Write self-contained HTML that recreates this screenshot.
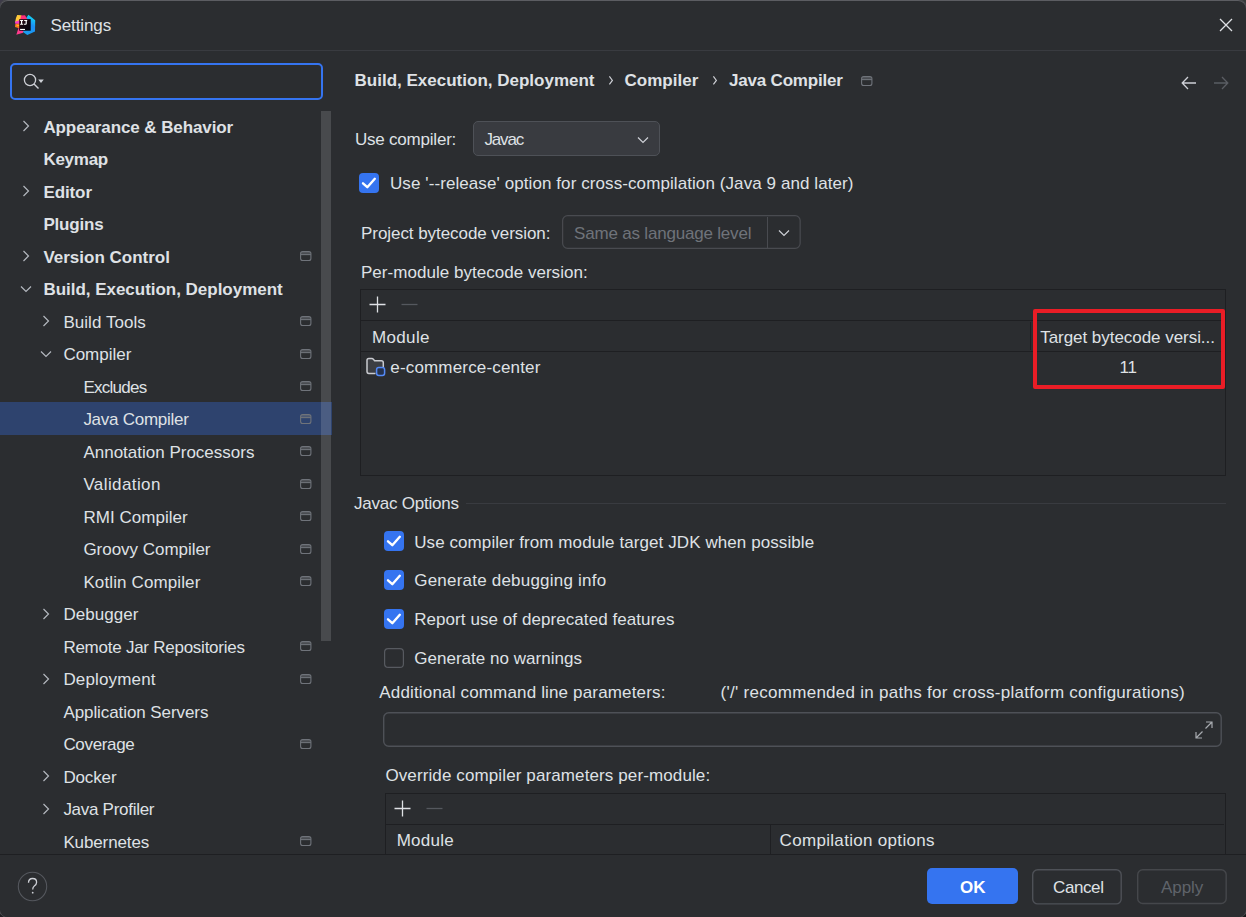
<!DOCTYPE html>
<html><head><meta charset="utf-8">
<style>
html,body{margin:0;padding:0;width:1246px;height:917px;overflow:hidden;background:#1E1F22;position:relative;}
.cn{position:absolute;width:12px;height:12px;}
#win{position:absolute;left:0;top:0;width:1246px;height:917px;background:#2B2D30;border-radius:8px;overflow:hidden;box-shadow:inset 0 1px 0 #5C5D62, 0 0 0 1px #48494D;}
.t{position:absolute;font-family:"Liberation Sans",sans-serif;font-size:17px;line-height:20px;color:#DFE1E5;white-space:nowrap;}
.b{font-weight:bold;}
.g{color:#6F737A;}
.abs{position:absolute;}
svg{position:absolute;overflow:visible;}
</style></head><body>
<div class="cn" style="left:0;top:0;background:#3D3B48;"></div><div class="cn" style="right:0;top:0;background:#363A3A;"></div><div class="cn" style="left:0;bottom:0;background:#1E1F22;"></div><div class="cn" style="right:0;bottom:0;background:#17181A;"></div>
<div id="win">

<svg style="left:12px;top:12px" width="26" height="26" viewBox="0 0 26 26">
    <defs>
      <linearGradient id="lgb" x1="0.7" y1="0" x2="0.3" y2="1"><stop offset="0" stop-color="#11E0F5"/><stop offset="0.45" stop-color="#1C8EF5"/><stop offset="1" stop-color="#1AA0F0"/></linearGradient>
      <linearGradient id="lgk" x1="0" y1="0" x2="1" y2="1"><stop offset="0" stop-color="#3A0A1A"/><stop offset="0.5" stop-color="#12060F"/><stop offset="1" stop-color="#050510"/></linearGradient>
    </defs>
    <polygon points="16.4,2.8 23.2,8.3 23,19.6 15.3,23 10.8,19.9 13.5,7" fill="url(#lgb)"/>
    <polygon points="5.2,3 9.5,3.2 9,8.5 3,10.5 4,6" fill="#FFC93A"/>
    <polygon points="9,3.5 13,3.2 15.2,7 14,9 8,9" fill="#FF2F7A"/>
    <polygon points="3,9.7 8,8 8,12 3.2,11.8" fill="#F53BC8"/>
    <polygon points="3.4,12 8,11.5 8,16.5 3,15" fill="#FF7A1E"/>
    <polygon points="6,14 8,14 8,13.5 4,12.8" fill="#FFD11E"/>
    <polygon points="4.3,22.7 6.5,16 11.5,19 11,20.8" fill="#FF3B8C"/>
    <rect x="7.2" y="7.1" width="11.5" height="11.6" fill="url(#lgk)"/>
    <path d="M8.1 8.1 H11.1 V9.1 H10.2 V11.8 H11.1 V12.8 H8.1 V11.8 H9 V9.1 H8.1 Z M12.2 8.1 H15.2 V9.1 H14.8 V11.6 Q14.8 12.8 13.6 12.8 H11.9 V11.8 H13.2 Q13.6 11.8 13.6 11.4 V9.1 H12.2 Z" fill="#fff"/>
    <rect x="8.1" y="16.9" width="4.9" height="1.1" fill="#fff"/>
  </svg>
<div class="t " style="left:50.5px;top:16px;letter-spacing:-0.100px;">Settings</div>
<svg style="left:1219px;top:18px" width="14" height="14" viewBox="0 0 14 14"><path d="M1 1 L13 13 M13 1 L1 13" stroke="#DFE1E5" stroke-width="1.3" fill="none"/></svg>
<div class="abs" style="left:0px;top:50px;width:1246px;height:1px;background:#393B40;"></div>
<div class="abs" style="left:10px;top:63px;width:309px;height:33px;border:2px solid #3574F0;border-radius:5px;"></div>
<svg style="left:22px;top:72px" width="24" height="18" viewBox="0 0 24 18">
    <circle cx="8" cy="8" r="5.6" stroke="#CED0D6" stroke-width="1.3" fill="none"/>
    <path d="M12 12 L16.5 16.5" stroke="#CED0D6" stroke-width="1.4"/>
    <polygon points="16.2,7.4 21.8,7.4 19,10.9" fill="#CED0D6"/>
  </svg>
<div class="abs" style="left:0;top:101px;width:340px;height:753px;overflow:hidden;">
<div class="abs" style="left:0;top:301px;width:331.5px;height:33px;background:#2E436E;"></div>
<div class="t b" style="left:43.4px;top:17px;letter-spacing:-0.100px;">Appearance &amp; Behavior</div>
<svg style="left:19.8px;top:18.25px" width="12" height="14" viewBox="0 0 12 14"><path d="M3.5 2 L8.5 7 L3.5 12" stroke="#B4B8BF" stroke-width="1.2" fill="none"/></svg>
<div class="t b" style="left:43.4px;top:49px;letter-spacing:-0.260px;">Keymap</div>
<div class="t b" style="left:43.4px;top:82px;letter-spacing:-0.100px;">Editor</div>
<svg style="left:19.8px;top:83.25px" width="12" height="14" viewBox="0 0 12 14"><path d="M3.5 2 L8.5 7 L3.5 12" stroke="#B4B8BF" stroke-width="1.2" fill="none"/></svg>
<div class="t b" style="left:43.4px;top:114px;letter-spacing:-0.183px;">Plugins</div>
<div class="t b" style="left:43.4px;top:147px;">Version Control</div>
<svg style="left:19.8px;top:148.25px" width="12" height="14" viewBox="0 0 12 14"><path d="M3.5 2 L8.5 7 L3.5 12" stroke="#B4B8BF" stroke-width="1.2" fill="none"/></svg>
<svg style="left:300px;top:150.05px" width="12" height="11" viewBox="0 0 12 11"><rect x="0.6" y="0.6" width="10.3" height="8.9" rx="2" stroke="#6F737A" stroke-width="1.1" fill="none"/><rect x="1" y="1" width="9.5" height="2.6" fill="#6F737A" opacity="0.45"/><path d="M0.6 3.6 H10.9" stroke="#6F737A" stroke-width="1.1"/></svg>
<div class="t b" style="left:43.4px;top:179px;letter-spacing:-0.022px;">Build, Execution, Deployment</div>
<svg style="left:19px;top:181.75px" width="14" height="12" viewBox="0 0 14 12"><path d="M2 3.5 L7 8.5 L12 3.5" stroke="#B4B8BF" stroke-width="1.2" fill="none"/></svg>
<div class="t " style="left:63.4px;top:212px;letter-spacing:0.050px;">Build Tools</div>
<svg style="left:39.8px;top:213.25px" width="12" height="14" viewBox="0 0 12 14"><path d="M3.5 2 L8.5 7 L3.5 12" stroke="#B4B8BF" stroke-width="1.2" fill="none"/></svg>
<svg style="left:300px;top:215.05px" width="12" height="11" viewBox="0 0 12 11"><rect x="0.6" y="0.6" width="10.3" height="8.9" rx="2" stroke="#6F737A" stroke-width="1.1" fill="none"/><rect x="1" y="1" width="9.5" height="2.6" fill="#6F737A" opacity="0.45"/><path d="M0.6 3.6 H10.9" stroke="#6F737A" stroke-width="1.1"/></svg>
<div class="t " style="left:63.4px;top:244px;">Compiler</div>
<svg style="left:39px;top:246.75px" width="14" height="12" viewBox="0 0 14 12"><path d="M2 3.5 L7 8.5 L12 3.5" stroke="#B4B8BF" stroke-width="1.2" fill="none"/></svg>
<svg style="left:300px;top:247.55px" width="12" height="11" viewBox="0 0 12 11"><rect x="0.6" y="0.6" width="10.3" height="8.9" rx="2" stroke="#6F737A" stroke-width="1.1" fill="none"/><rect x="1" y="1" width="9.5" height="2.6" fill="#6F737A" opacity="0.45"/><path d="M0.6 3.6 H10.9" stroke="#6F737A" stroke-width="1.1"/></svg>
<div class="t " style="left:83.4px;top:277px;letter-spacing:-0.743px;">Excludes</div>
<svg style="left:300px;top:280.05px" width="12" height="11" viewBox="0 0 12 11"><rect x="0.6" y="0.6" width="10.3" height="8.9" rx="2" stroke="#6F737A" stroke-width="1.1" fill="none"/><rect x="1" y="1" width="9.5" height="2.6" fill="#6F737A" opacity="0.45"/><path d="M0.6 3.6 H10.9" stroke="#6F737A" stroke-width="1.1"/></svg>
<div class="t " style="left:83.4px;top:309px;letter-spacing:-0.267px;">Java Compiler</div>
<svg style="left:300px;top:312.55px" width="12" height="11" viewBox="0 0 12 11"><rect x="0.6" y="0.6" width="10.3" height="8.9" rx="2" stroke="#6F737A" stroke-width="1.1" fill="none"/><rect x="1" y="1" width="9.5" height="2.6" fill="#6F737A" opacity="0.45"/><path d="M0.6 3.6 H10.9" stroke="#6F737A" stroke-width="1.1"/></svg>
<div class="t " style="left:83.4px;top:342px;">Annotation Processors</div>
<svg style="left:300px;top:345.05px" width="12" height="11" viewBox="0 0 12 11"><rect x="0.6" y="0.6" width="10.3" height="8.9" rx="2" stroke="#6F737A" stroke-width="1.1" fill="none"/><rect x="1" y="1" width="9.5" height="2.6" fill="#6F737A" opacity="0.45"/><path d="M0.6 3.6 H10.9" stroke="#6F737A" stroke-width="1.1"/></svg>
<div class="t " style="left:83.4px;top:374px;letter-spacing:0.400px;">Validation</div>
<svg style="left:300px;top:377.55px" width="12" height="11" viewBox="0 0 12 11"><rect x="0.6" y="0.6" width="10.3" height="8.9" rx="2" stroke="#6F737A" stroke-width="1.1" fill="none"/><rect x="1" y="1" width="9.5" height="2.6" fill="#6F737A" opacity="0.45"/><path d="M0.6 3.6 H10.9" stroke="#6F737A" stroke-width="1.1"/></svg>
<div class="t " style="left:83.4px;top:407px;letter-spacing:0.036px;">RMI Compiler</div>
<svg style="left:300px;top:410.05px" width="12" height="11" viewBox="0 0 12 11"><rect x="0.6" y="0.6" width="10.3" height="8.9" rx="2" stroke="#6F737A" stroke-width="1.1" fill="none"/><rect x="1" y="1" width="9.5" height="2.6" fill="#6F737A" opacity="0.45"/><path d="M0.6 3.6 H10.9" stroke="#6F737A" stroke-width="1.1"/></svg>
<div class="t " style="left:83.4px;top:439px;letter-spacing:-0.029px;">Groovy Compiler</div>
<svg style="left:300px;top:442.55px" width="12" height="11" viewBox="0 0 12 11"><rect x="0.6" y="0.6" width="10.3" height="8.9" rx="2" stroke="#6F737A" stroke-width="1.1" fill="none"/><rect x="1" y="1" width="9.5" height="2.6" fill="#6F737A" opacity="0.45"/><path d="M0.6 3.6 H10.9" stroke="#6F737A" stroke-width="1.1"/></svg>
<div class="t " style="left:83.4px;top:472px;letter-spacing:0.121px;">Kotlin Compiler</div>
<svg style="left:300px;top:475.05px" width="12" height="11" viewBox="0 0 12 11"><rect x="0.6" y="0.6" width="10.3" height="8.9" rx="2" stroke="#6F737A" stroke-width="1.1" fill="none"/><rect x="1" y="1" width="9.5" height="2.6" fill="#6F737A" opacity="0.45"/><path d="M0.6 3.6 H10.9" stroke="#6F737A" stroke-width="1.1"/></svg>
<div class="t " style="left:63.4px;top:504px;letter-spacing:0.057px;">Debugger</div>
<svg style="left:39.8px;top:505.75px" width="12" height="14" viewBox="0 0 12 14"><path d="M3.5 2 L8.5 7 L3.5 12" stroke="#B4B8BF" stroke-width="1.2" fill="none"/></svg>
<div class="t " style="left:63.4px;top:537px;letter-spacing:-0.250px;">Remote Jar Repositories</div>
<svg style="left:300px;top:540.05px" width="12" height="11" viewBox="0 0 12 11"><rect x="0.6" y="0.6" width="10.3" height="8.9" rx="2" stroke="#6F737A" stroke-width="1.1" fill="none"/><rect x="1" y="1" width="9.5" height="2.6" fill="#6F737A" opacity="0.45"/><path d="M0.6 3.6 H10.9" stroke="#6F737A" stroke-width="1.1"/></svg>
<div class="t " style="left:63.4px;top:569px;letter-spacing:0.156px;">Deployment</div>
<svg style="left:39.8px;top:570.75px" width="12" height="14" viewBox="0 0 12 14"><path d="M3.5 2 L8.5 7 L3.5 12" stroke="#B4B8BF" stroke-width="1.2" fill="none"/></svg>
<svg style="left:300px;top:572.55px" width="12" height="11" viewBox="0 0 12 11"><rect x="0.6" y="0.6" width="10.3" height="8.9" rx="2" stroke="#6F737A" stroke-width="1.1" fill="none"/><rect x="1" y="1" width="9.5" height="2.6" fill="#6F737A" opacity="0.45"/><path d="M0.6 3.6 H10.9" stroke="#6F737A" stroke-width="1.1"/></svg>
<div class="t " style="left:63.4px;top:602px;letter-spacing:-0.078px;">Application Servers</div>
<div class="t " style="left:63.4px;top:634px;letter-spacing:-0.329px;">Coverage</div>
<svg style="left:300px;top:637.55px" width="12" height="11" viewBox="0 0 12 11"><rect x="0.6" y="0.6" width="10.3" height="8.9" rx="2" stroke="#6F737A" stroke-width="1.1" fill="none"/><rect x="1" y="1" width="9.5" height="2.6" fill="#6F737A" opacity="0.45"/><path d="M0.6 3.6 H10.9" stroke="#6F737A" stroke-width="1.1"/></svg>
<div class="t " style="left:63.4px;top:667px;letter-spacing:-0.140px;">Docker</div>
<svg style="left:39.8px;top:668.25px" width="12" height="14" viewBox="0 0 12 14"><path d="M3.5 2 L8.5 7 L3.5 12" stroke="#B4B8BF" stroke-width="1.2" fill="none"/></svg>
<div class="t " style="left:63.4px;top:699px;letter-spacing:-0.283px;">Java Profiler</div>
<svg style="left:39.8px;top:700.75px" width="12" height="14" viewBox="0 0 12 14"><path d="M3.5 2 L8.5 7 L3.5 12" stroke="#B4B8BF" stroke-width="1.2" fill="none"/></svg>
<div class="t " style="left:63.4px;top:732px;letter-spacing:-0.122px;">Kubernetes</div>
<svg style="left:300px;top:735.05px" width="12" height="11" viewBox="0 0 12 11"><rect x="0.6" y="0.6" width="10.3" height="8.9" rx="2" stroke="#6F737A" stroke-width="1.1" fill="none"/><rect x="1" y="1" width="9.5" height="2.6" fill="#6F737A" opacity="0.45"/><path d="M0.6 3.6 H10.9" stroke="#6F737A" stroke-width="1.1"/></svg>
<div class="abs" style="left:321px;top:10px;width:10px;height:530px;background:rgba(255,255,255,0.14);"></div>
</div>
<div class="t b" style="left:354.6px;top:71px;">Build, Execution, Deployment</div>
<div class="t b" style="left:624.4px;top:71px;letter-spacing:0.043px;">Compiler</div>
<div class="t b" style="left:729px;top:71px;letter-spacing:-0.192px;">Java Compiler</div>
<svg style="left:607.5px;top:75px" width="6" height="11" viewBox="0 0 6 11"><path d="M1.4 1.4 L4.4 5.4 L1.4 9.4" stroke="#D0D2D7" stroke-width="1.15" fill="none"/></svg>
<svg style="left:712.2px;top:75px" width="6" height="11" viewBox="0 0 6 11"><path d="M1.4 1.4 L4.4 5.4 L1.4 9.4" stroke="#D0D2D7" stroke-width="1.15" fill="none"/></svg>
<svg style="left:861px;top:76px" width="12" height="11" viewBox="0 0 12 11"><rect x="0.6" y="0.6" width="10.3" height="8.9" rx="2" stroke="#6F737A" stroke-width="1.1" fill="none"/><rect x="1" y="1" width="9.5" height="2.6" fill="#6F737A" opacity="0.45"/><path d="M0.6 3.6 H10.9" stroke="#6F737A" stroke-width="1.1"/></svg>
<svg style="left:1181px;top:76px" width="16" height="14" viewBox="0 0 16 14"><path d="M7 1 L1.2 7 L7 13 M1.5 7 H15" stroke="#CED0D6" stroke-width="1.3" fill="none"/></svg>
<svg style="left:1213px;top:76px" width="16" height="14" viewBox="0 0 16 14"><path d="M9 1 L14.8 7 L9 13 M14.5 7 H1" stroke="#5A5D63" stroke-width="1.3" fill="none"/></svg>
<div class="t " style="left:355px;top:130px;letter-spacing:-0.217px;">Use compiler:</div>
<div class="abs" style="left:473px;top:121px;width:185px;height:33px;border:1px solid #4E5157;border-radius:5px;background:#393B40;"></div>
<div class="t " style="left:484.4px;top:130px;letter-spacing:-1.125px;">Javac</div>
<svg style="left:636px;top:134px" width="14" height="12" viewBox="0 0 14 12"><path d="M2 3.5 L7 8.5 L12 3.5" stroke="#CED0D6" stroke-width="1.2" fill="none"/></svg>
<svg style="left:359px;top:173px" width="20" height="20" viewBox="0 0 20 20"><rect x="0" y="0" width="20" height="20" rx="4" fill="#3574F0"/><path d="M4 10.3 L8.3 14.2 L15.8 5.8" stroke="#fff" stroke-width="2.4" fill="none" stroke-linecap="round" stroke-linejoin="round"/></svg>
<div class="t " style="left:390px;top:174px;letter-spacing:0.087px;">Use '--release' option for cross-compilation (Java 9 and later)</div>
<div class="t " style="left:361px;top:224px;letter-spacing:-0.058px;">Project bytecode version:</div>
<svg style="left:561.5px;top:215.4px" width="238.79999999999995" height="33.900000000000006" viewBox="0 0 238.79999999999995 33.900000000000006"><rect x="0.6" y="0.6" width="237.59999999999997" height="32.7" rx="5" fill="none" stroke="#494B50" stroke-width="1.2"/></svg>
<div class="abs" style="left:766.5px;top:216.5px;width:1px;height:32px;background:#494B50;"></div>
<div class="t g" style="left:574px;top:224px;letter-spacing:-0.190px;">Same as language level</div>
<svg style="left:777px;top:227px" width="14" height="12" viewBox="0 0 14 12"><path d="M2 3.5 L7 8.5 L12 3.5" stroke="#CED0D6" stroke-width="1.2" fill="none"/></svg>
<div class="t " style="left:361px;top:263px;letter-spacing:0.030px;">Per-module bytecode version:</div>
<div class="abs" style="left:360px;top:289px;width:864px;height:185px;border:1px solid #1E1F22;"></div>
<svg style="left:369px;top:296px" width="17" height="17" viewBox="0 0 17 17"><path d="M8.5 0.5 V16.5 M0.5 8.5 H16.5" stroke="#DFE1E5" stroke-width="1.3"/></svg>
<svg style="left:401px;top:296px" width="17" height="17" viewBox="0 0 17 17"><path d="M0.5 8.5 H16.5" stroke="#55585E" stroke-width="1.3"/></svg>
<div class="abs" style="left:361px;top:320px;width:863px;height:1px;background:#1E1F22;"></div>
<div class="abs" style="left:361px;top:350.5px;width:863px;height:1px;background:#1E1F22;"></div>
<div class="abs" style="left:1030px;top:322px;width:1px;height:28px;background:#1E1F22;"></div>
<div class="t " style="left:372px;top:328px;letter-spacing:0.340px;">Module</div>
<div class="t " style="left:1040.2px;top:328px;letter-spacing:-0.043px;">Target bytecode versi...</div>
<svg style="left:365px;top:357px" width="22" height="20" viewBox="0 0 22 20">
  <path d="M2 3.3 Q2 1.5 3.8 1.5 H6.8 Q7.8 1.5 8.5 2.4 L9.6 3.8 H16.3 Q18.3 3.8 18.3 5.8 V16.4 H3.8 Q2 16.4 2 14.6 Z" fill="#3C3E43"/><path d="M10.5 16.4 H3.8 Q2 16.4 2 14.6 V3.3 Q2 1.5 3.8 1.5 H6.8 Q7.8 1.5 8.5 2.4 L9.6 3.8 H16.3 Q18.3 3.8 18.3 5.8 V10.5" fill="none" stroke="#C9CBD0" stroke-width="1.5" stroke-linejoin="round"/>
  <rect x="11.6" y="10.6" width="8" height="7.8" rx="2.2" fill="#25324D" stroke="#548AF7" stroke-width="1.5"/>
</svg>
<div class="t " style="left:390.3px;top:358px;letter-spacing:0.169px;">e-commerce-center</div>
<div class="t " style="left:1119.4px;top:358px;">11</div>
<div class="abs" style="left:1032.5px;top:309px;width:184px;height:72px;border:4px solid #EA1D26;border-radius:2px;"></div>
<div class="t " style="left:354px;top:494px;letter-spacing:-0.233px;">Javac Options</div>
<div class="abs" style="left:466px;top:502.5px;width:759.5px;height:1px;background:#393B40;"></div>
<svg style="left:384px;top:531px" width="20" height="20" viewBox="0 0 20 20"><rect x="0" y="0" width="20" height="20" rx="4" fill="#3574F0"/><path d="M4 10.3 L8.3 14.2 L15.8 5.8" stroke="#fff" stroke-width="2.4" fill="none" stroke-linecap="round" stroke-linejoin="round"/></svg>
<div class="t " style="left:414.2px;top:533px;letter-spacing:0.085px;">Use compiler from module target JDK when possible</div>
<svg style="left:384px;top:570px" width="20" height="20" viewBox="0 0 20 20"><rect x="0" y="0" width="20" height="20" rx="4" fill="#3574F0"/><path d="M4 10.3 L8.3 14.2 L15.8 5.8" stroke="#fff" stroke-width="2.4" fill="none" stroke-linecap="round" stroke-linejoin="round"/></svg>
<div class="t " style="left:414.2px;top:571px;letter-spacing:0.218px;">Generate debugging info</div>
<svg style="left:384px;top:609px" width="20" height="20" viewBox="0 0 20 20"><rect x="0" y="0" width="20" height="20" rx="4" fill="#3574F0"/><path d="M4 10.3 L8.3 14.2 L15.8 5.8" stroke="#fff" stroke-width="2.4" fill="none" stroke-linecap="round" stroke-linejoin="round"/></svg>
<div class="t " style="left:414.2px;top:610px;letter-spacing:0.069px;">Report use of deprecated features</div>
<svg style="left:384px;top:648px" width="20" height="20" viewBox="0 0 20 20"><rect x="0.6" y="0.6" width="18.8" height="18.8" rx="3.5" fill="none" stroke="#575A60" stroke-width="1.2"/></svg>
<div class="t " style="left:414.2px;top:649px;letter-spacing:0.032px;">Generate no warnings</div>
<div class="t " style="left:379.3px;top:683px;letter-spacing:0.162px;">Additional command line parameters:</div>
<div class="t " style="left:720.6px;top:683px;letter-spacing:0.278px;">('/' recommended in paths for cross-platform configurations)</div>
<svg style="left:382.6px;top:712.4px" width="838.9" height="35.0" viewBox="0 0 838.9 35.0"><rect x="0.7" y="0.7" width="837.5" height="33.6" rx="5" fill="none" stroke="#4E5157" stroke-width="1.4"/></svg>
<svg style="left:1194px;top:720px" width="20" height="20" viewBox="0 0 20 20"><path d="M12 2 H18 V8 M18 2 L11.5 8.5 M2 12 V18 H8 M2 18 L8.5 11.5" stroke="#A8ABB0" stroke-width="1.2" fill="none"/></svg>
<div class="t " style="left:385.4px;top:766px;letter-spacing:0.115px;">Override compiler parameters per-module:</div>
<div class="abs" style="left:385.4px;top:793px;width:839px;height:80px;border:1px solid #1E1F22;"></div>
<svg style="left:394px;top:800px" width="17" height="17" viewBox="0 0 17 17"><path d="M8.5 0.5 V16.5 M0.5 8.5 H16.5" stroke="#DFE1E5" stroke-width="1.3"/></svg>
<svg style="left:426.4px;top:800px" width="17" height="17" viewBox="0 0 17 17"><path d="M0.5 8.5 H16.5" stroke="#55585E" stroke-width="1.3"/></svg>
<div class="abs" style="left:386.4px;top:824px;width:838px;height:1px;background:#1E1F22;"></div>
<div class="abs" style="left:769.5px;top:825px;width:1px;height:40px;background:#1E1F22;"></div>
<div class="t " style="left:396.7px;top:831px;letter-spacing:0.240px;">Module</div>
<div class="t " style="left:779.6px;top:831px;letter-spacing:0.311px;">Compilation options</div>
<div class="abs" style="left:0;top:854px;width:1246px;height:63px;background:#2B2D30;"></div>
<div class="abs" style="left:0px;top:854px;width:1246px;height:1px;background:#1E1F22;"></div>
<svg style="left:17px;top:871px" width="31" height="31" viewBox="0 0 31 31">
  <circle cx="15.5" cy="15.5" r="14.2" stroke="#55585E" stroke-width="1.1" fill="none"/>
  <path d="M11.5 11.8 Q11.5 7.5 15.6 7.5 Q19.6 7.5 19.6 11.3 Q19.6 13.5 17.3 15 Q15.7 16.1 15.7 18.6" stroke="#CED0D6" stroke-width="1.3" fill="none"/>
  <circle cx="15.7" cy="21.7" r="0.9" fill="#CED0D6"/>
</svg>
<div class="abs" style="left:927px;top:868.4px;width:91px;height:36px;border-radius:5px;background:#3574F0;"></div>
<div class="t b" style="left:960px;top:878px;color:#fff;">OK</div>
<svg style="left:1032.4px;top:868.6px" width="89.89999999999986" height="35.60000000000002" viewBox="0 0 89.89999999999986 35.60000000000002"><rect x="0.7" y="0.7" width="88.49999999999986" height="34.200000000000024" rx="5" fill="none" stroke="#4E5157" stroke-width="1.4"/></svg>
<div class="t " style="left:1053px;top:878px;letter-spacing:-0.400px;">Cancel</div>
<svg style="left:1137.4px;top:868.6px" width="89.89999999999986" height="35.19999999999993" viewBox="0 0 89.89999999999986 35.19999999999993"><rect x="0.7" y="0.7" width="88.49999999999986" height="33.79999999999993" rx="5" fill="none" stroke="#45474B" stroke-width="1.4"/></svg>
<div class="t " style="left:1161px;top:878px;color:#5F636A;letter-spacing:-0.050px;">Apply</div>
</div></body></html>
